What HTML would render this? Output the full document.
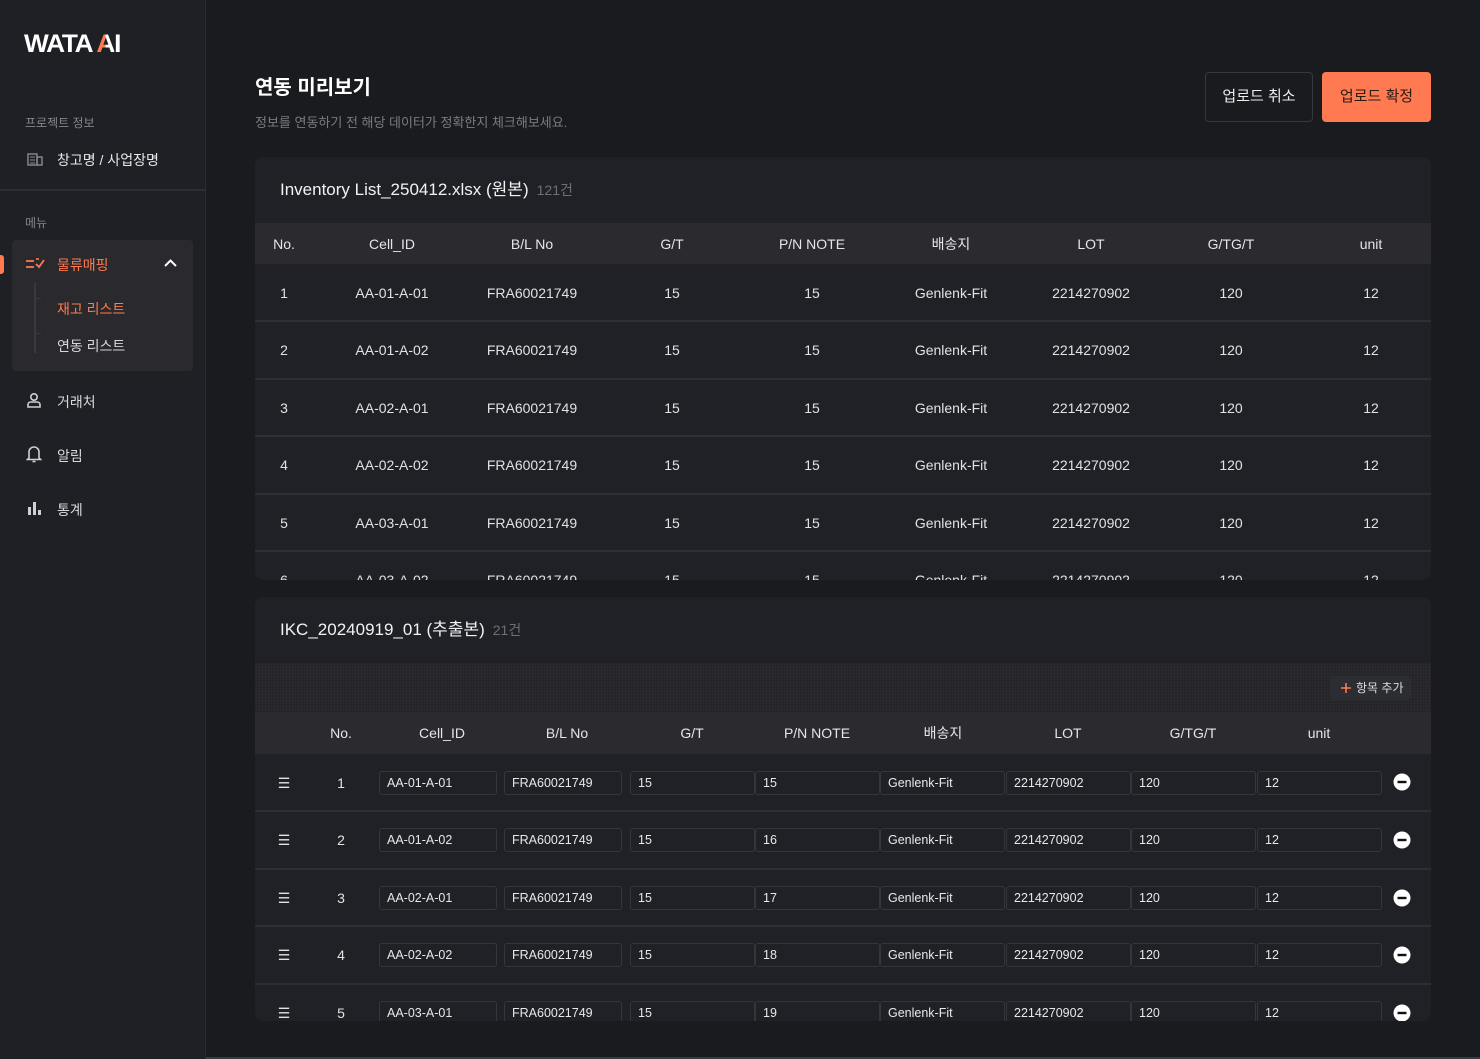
<!DOCTYPE html>
<html><head><meta charset="utf-8"><style>
*{box-sizing:border-box;margin:0;padding:0}
body{width:1480px;height:1059px;background:#1a1b1f;font-family:"Liberation Sans","Noto Sans CJK KR",sans-serif;color:#e6e6e8;position:relative;overflow:hidden}
.abs{position:absolute}
.side{left:0;top:0;width:206px;height:1059px;background:#1f2025;border-right:1px solid #2b2c31}
.logo{left:24px;top:30px;font-size:25px;font-weight:bold;letter-spacing:-1.2px;color:#fff;transform:scaleX(1.05);transform-origin:left}
.oa{background:linear-gradient(90deg,#ff7a50 50%,#fff 50%);-webkit-background-clip:text;background-clip:text;color:transparent}
.lab{font-size:12px;color:#85868c}
.mi{font-size:14px;color:#d8d8db}
.card{left:255px;width:1176px;background:#202126;border-radius:8px;overflow:hidden}
.ctitle{position:absolute;left:25px;font-size:17px;color:#f2f2f2}
.ctitle span{font-size:14px;color:#6e6f75;margin-left:8px}
.hdr{position:absolute;left:0;width:1176px;background:#2a2a2f;font-size:14px}
.row{position:absolute;left:0;width:1176px;border-top:2px solid #2e2f34;font-size:14px;color:#e2e2e4}
.c{position:absolute;text-align:center;width:140px;transform:translateX(-70px);top:50%;margin-top:-9px;line-height:18px}
.inp{position:absolute;top:50%;margin-top:-12px;height:24px;width:118px;border:1px solid #35363b;border-radius:3px;font-size:12.5px;line-height:22px;padding-left:7px;color:#e8e8ea}
</style></head><body>
<div class="abs side">
 <div class="abs logo">WATA <span class="oa">A</span>I</div>
 <div class="abs lab" style="left:25px;top:114px">프로젝트 정보</div>
 <svg class="abs" style="left:27px;top:152px" width="16" height="14" viewBox="0 0 16 14"><rect x="1" y="2" width="9" height="11" fill="none" stroke="#8a8b90" stroke-width="1.4"/><rect x="10" y="5" width="5" height="8" fill="none" stroke="#8a8b90" stroke-width="1.4"/><path d="M3 5h5M3 8h5M3 11h5" stroke="#8a8b90"/></svg>
 <div class="abs mi" style="left:57px;top:150px;color:#e8e8ea">창고명 / 사업장명</div>
 <div class="abs" style="left:0;top:189px;width:205px;height:2px;background:#2c2d32"></div>
 <div class="abs lab" style="left:25px;top:214px">메뉴</div>
 <div class="abs" style="left:0;top:255px;width:4px;height:19px;background:#ff7a50;border-radius:0 3px 3px 0"></div>
 <div class="abs" style="left:12px;top:240px;width:181px;height:131px;background:#29292e;border-radius:4px"></div>
 <svg class="abs" style="left:25px;top:257px" width="20" height="14" viewBox="0 0 20 14"><path d="M1 4h8M1 10h8" stroke="#ff7a50" stroke-width="1.8"/><path d="M11 7l3 3 5-7" stroke="#ff7a50" stroke-width="1.8" fill="none"/><path d="M11 2h3" stroke="#ff7a50" stroke-width="1.6"/></svg>
 <div class="abs mi" style="left:57px;top:255px;color:#ff7a50">물류매핑</div>
 <svg class="abs" style="left:164px;top:259px" width="13" height="9" viewBox="0 0 13 9"><path d="M1 7l5.5-5.5L12 7" stroke="#fff" stroke-width="2" fill="none"/></svg>
 <div class="abs" style="left:34px;top:283px;width:2px;height:70px;background:#38393e"></div>
 <div class="abs" style="left:36px;top:298px;width:5px;height:1px;background:#38393e"></div>
 <div class="abs" style="left:36px;top:333px;width:5px;height:1px;background:#38393e"></div>
 <div class="abs mi" style="left:57px;top:299px;color:#ff7a50">재고 리스트</div>
 <div class="abs mi" style="left:57px;top:336px">연동 리스트</div>
 <svg class="abs" style="left:26px;top:392px" width="16" height="16" viewBox="0 0 16 16"><circle cx="8" cy="5" r="3.2" fill="none" stroke="#d0d0d3" stroke-width="1.6"/><path d="M2 15v-2.5c0-1.5 1.5-2.5 3-2.5h6c1.5 0 3 1 3 2.5V15z" fill="none" stroke="#d0d0d3" stroke-width="1.6"/></svg>
 <div class="abs mi" style="left:57px;top:392px">거래처</div>
 <svg class="abs" style="left:26px;top:445px" width="16" height="18" viewBox="0 0 16 18"><path d="M3 13V7a5 5 0 0110 0v6l1.5 1.5h-13z" fill="none" stroke="#d0d0d3" stroke-width="1.6"/><path d="M6.5 16.5h3" stroke="#d0d0d3" stroke-width="1.6"/></svg>
 <div class="abs mi" style="left:57px;top:446px">알림</div>
 <svg class="abs" style="left:27px;top:501px" width="16" height="14" viewBox="0 0 16 14"><rect x="1" y="6" width="3" height="8" fill="#d0d0d3"/><rect x="6" y="1" width="3" height="13" fill="#d0d0d3"/><rect x="11" y="9" width="3" height="5" fill="#d0d0d3"/></svg>
 <div class="abs mi" style="left:57px;top:500px">통계</div>
</div>
<div class="abs" style="left:206px;top:1057px;width:1274px;height:2px;background:#3a3b40"></div>

<div class="abs" style="left:255px;top:71px;font-size:20px;font-weight:bold;color:#fff">연동 미리보기</div>
<div class="abs" style="left:255px;top:112px;font-size:13px;color:#7a7b80">정보를 연동하기 전 해당 데이터가 정확한지 체크해보세요.</div>
<div class="abs" style="left:1205px;top:72px;width:108px;height:50px;border:1px solid #37383d;border-radius:4px;font-size:15px;text-align:center;line-height:48px;color:#eee">업로드 취소</div>
<div class="abs" style="left:1322px;top:72px;width:109px;height:50px;background:#ff7a50;border-radius:4px;font-size:15px;text-align:center;line-height:50px;color:#2b1a12">업로드 확정</div>

<div class="abs card" style="top:157px;height:423px">
 <div class="ctitle" style="top:18px">Inventory List_250412.xlsx (원본)<span>121건</span></div>
 <div class="hdr" style="top:66px;height:41px">
  <div class="c" style="left:29px">No.</div>
  <div class="c" style="left:137px">Cell_ID</div><div class="c" style="left:277px">B/L No</div><div class="c" style="left:417px">G/T</div><div class="c" style="left:557px">P/N NOTE</div><div class="c" style="left:696px">배송지</div><div class="c" style="left:836px">LOT</div><div class="c" style="left:976px">G/TG/T</div><div class="c" style="left:1116px">unit</div>
 </div>
 <div class="row" style="top:107px;height:57px;border-top:none"><div class="c" style="left:29px">1</div><div class="c" style="left:137px">AA-01-A-01</div><div class="c" style="left:277px">FRA60021749</div><div class="c" style="left:417px">15</div><div class="c" style="left:557px">15</div><div class="c" style="left:696px">Genlenk-Fit</div><div class="c" style="left:836px">2214270902</div><div class="c" style="left:976px">120</div><div class="c" style="left:1116px">12</div></div>
 <div class="row" style="top:163px;height:58px"><div class="c" style="left:29px">2</div><div class="c" style="left:137px">AA-01-A-02</div><div class="c" style="left:277px">FRA60021749</div><div class="c" style="left:417px">15</div><div class="c" style="left:557px">15</div><div class="c" style="left:696px">Genlenk-Fit</div><div class="c" style="left:836px">2214270902</div><div class="c" style="left:976px">120</div><div class="c" style="left:1116px">12</div></div>
 <div class="row" style="top:221px;height:58px"><div class="c" style="left:29px">3</div><div class="c" style="left:137px">AA-02-A-01</div><div class="c" style="left:277px">FRA60021749</div><div class="c" style="left:417px">15</div><div class="c" style="left:557px">15</div><div class="c" style="left:696px">Genlenk-Fit</div><div class="c" style="left:836px">2214270902</div><div class="c" style="left:976px">120</div><div class="c" style="left:1116px">12</div></div>
 <div class="row" style="top:278px;height:58px"><div class="c" style="left:29px">4</div><div class="c" style="left:137px">AA-02-A-02</div><div class="c" style="left:277px">FRA60021749</div><div class="c" style="left:417px">15</div><div class="c" style="left:557px">15</div><div class="c" style="left:696px">Genlenk-Fit</div><div class="c" style="left:836px">2214270902</div><div class="c" style="left:976px">120</div><div class="c" style="left:1116px">12</div></div>
 <div class="row" style="top:336px;height:58px"><div class="c" style="left:29px">5</div><div class="c" style="left:137px">AA-03-A-01</div><div class="c" style="left:277px">FRA60021749</div><div class="c" style="left:417px">15</div><div class="c" style="left:557px">15</div><div class="c" style="left:696px">Genlenk-Fit</div><div class="c" style="left:836px">2214270902</div><div class="c" style="left:976px">120</div><div class="c" style="left:1116px">12</div></div>
 <div class="row" style="top:393px;height:58px"><div class="c" style="left:29px">6</div><div class="c" style="left:137px">AA-03-A-02</div><div class="c" style="left:277px">FRA60021749</div><div class="c" style="left:417px">15</div><div class="c" style="left:557px">15</div><div class="c" style="left:696px">Genlenk-Fit</div><div class="c" style="left:836px">2214270902</div><div class="c" style="left:976px">120</div><div class="c" style="left:1116px">12</div></div>
</div>

<div class="abs card" style="top:597px;height:424px">
 <div class="ctitle" style="top:18px">IKC_20240919_01 (추출본)<span>21건</span></div>
 <div class="abs" style="left:0;top:66px;width:1176px;height:49px;background:#242429;background-image:radial-gradient(#2c2c31 0.8px,transparent 0.9px);background-size:3px 3px"></div>
 <div class="abs" style="left:1075px;top:79px;width:81px;height:24px;background:#2c2d32;border-radius:4px;font-size:12px;line-height:24px;color:#ddd;padding-left:26px">항목 추가</div>
 <svg class="abs" style="left:1085px;top:85px" width="12" height="12" viewBox="0 0 12 12"><path d="M6 1v10M1 6h10" stroke="#ff7a50" stroke-width="1.6"/></svg>
 <div class="hdr" style="top:115px;height:42px">
  <div class="c" style="left:86px">No.</div><div class="c" style="left:187px">Cell_ID</div><div class="c" style="left:312px">B/L No</div><div class="c" style="left:437px">G/T</div><div class="c" style="left:562px">P/N NOTE</div><div class="c" style="left:688px">배송지</div><div class="c" style="left:813px">LOT</div><div class="c" style="left:938px">G/TG/T</div><div class="c" style="left:1064px">unit</div>
 </div>
 <div class="row" style="top:157px;height:57px;border-top:none"><div class="c" style="left:29px">☰</div><div class="c" style="left:86px">1</div><div class="inp" style="left:124px">AA-01-A-01</div><div class="inp" style="left:249px">FRA60021749</div><div class="inp" style="left:375px;width:125px">15</div><div class="inp" style="left:500px;width:125px">15</div><div class="inp" style="left:625px;width:125px">Genlenk-Fit</div><div class="inp" style="left:751px;width:125px">2214270902</div><div class="inp" style="left:876px;width:125px">120</div><div class="inp" style="left:1002px;width:125px">12</div><svg class="abs" style="left:1138px;top:19px" width="18" height="18"><circle cx="9" cy="9" r="8.5" fill="#fff"/><rect x="4.5" y="7.8" width="9" height="2.4" fill="#111"/></svg></div>
 <div class="row" style="top:213px;height:58px"><div class="c" style="left:29px">☰</div><div class="c" style="left:86px">2</div><div class="inp" style="left:124px">AA-01-A-02</div><div class="inp" style="left:249px">FRA60021749</div><div class="inp" style="left:375px;width:125px">15</div><div class="inp" style="left:500px;width:125px">16</div><div class="inp" style="left:625px;width:125px">Genlenk-Fit</div><div class="inp" style="left:751px;width:125px">2214270902</div><div class="inp" style="left:876px;width:125px">120</div><div class="inp" style="left:1002px;width:125px">12</div><svg class="abs" style="left:1138px;top:19px" width="18" height="18"><circle cx="9" cy="9" r="8.5" fill="#fff"/><rect x="4.5" y="7.8" width="9" height="2.4" fill="#111"/></svg></div>
 <div class="row" style="top:271px;height:58px"><div class="c" style="left:29px">☰</div><div class="c" style="left:86px">3</div><div class="inp" style="left:124px">AA-02-A-01</div><div class="inp" style="left:249px">FRA60021749</div><div class="inp" style="left:375px;width:125px">15</div><div class="inp" style="left:500px;width:125px">17</div><div class="inp" style="left:625px;width:125px">Genlenk-Fit</div><div class="inp" style="left:751px;width:125px">2214270902</div><div class="inp" style="left:876px;width:125px">120</div><div class="inp" style="left:1002px;width:125px">12</div><svg class="abs" style="left:1138px;top:19px" width="18" height="18"><circle cx="9" cy="9" r="8.5" fill="#fff"/><rect x="4.5" y="7.8" width="9" height="2.4" fill="#111"/></svg></div>
 <div class="row" style="top:328px;height:58px"><div class="c" style="left:29px">☰</div><div class="c" style="left:86px">4</div><div class="inp" style="left:124px">AA-02-A-02</div><div class="inp" style="left:249px">FRA60021749</div><div class="inp" style="left:375px;width:125px">15</div><div class="inp" style="left:500px;width:125px">18</div><div class="inp" style="left:625px;width:125px">Genlenk-Fit</div><div class="inp" style="left:751px;width:125px">2214270902</div><div class="inp" style="left:876px;width:125px">120</div><div class="inp" style="left:1002px;width:125px">12</div><svg class="abs" style="left:1138px;top:19px" width="18" height="18"><circle cx="9" cy="9" r="8.5" fill="#fff"/><rect x="4.5" y="7.8" width="9" height="2.4" fill="#111"/></svg></div>
 <div class="row" style="top:386px;height:58px"><div class="c" style="left:29px">☰</div><div class="c" style="left:86px">5</div><div class="inp" style="left:124px">AA-03-A-01</div><div class="inp" style="left:249px">FRA60021749</div><div class="inp" style="left:375px;width:125px">15</div><div class="inp" style="left:500px;width:125px">19</div><div class="inp" style="left:625px;width:125px">Genlenk-Fit</div><div class="inp" style="left:751px;width:125px">2214270902</div><div class="inp" style="left:876px;width:125px">120</div><div class="inp" style="left:1002px;width:125px">12</div><svg class="abs" style="left:1138px;top:19px" width="18" height="18"><circle cx="9" cy="9" r="8.5" fill="#fff"/><rect x="4.5" y="7.8" width="9" height="2.4" fill="#111"/></svg></div>
</div>
</body></html>
